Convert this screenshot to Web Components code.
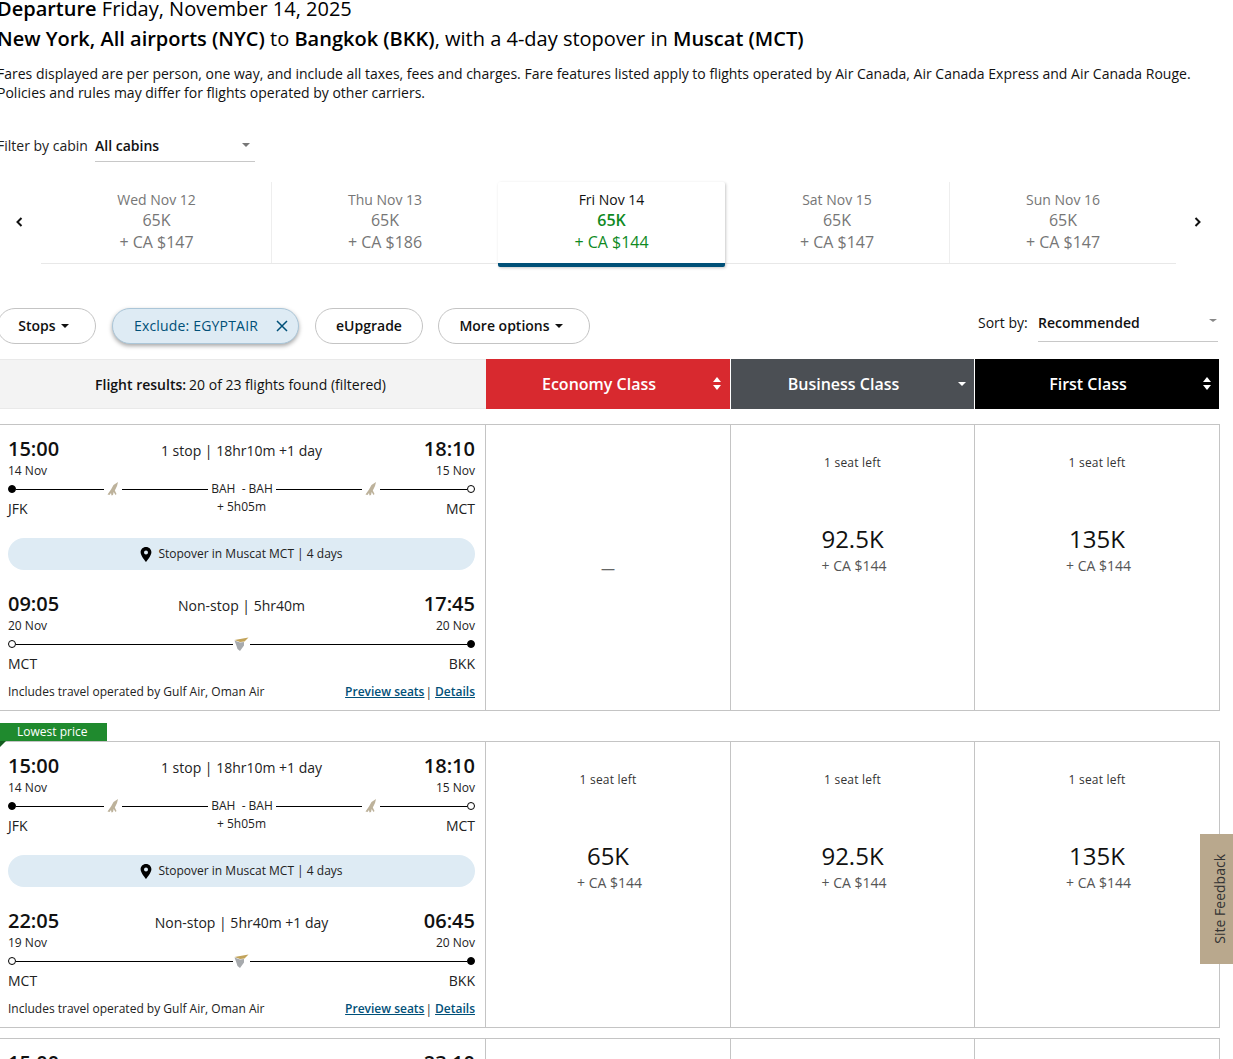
<!DOCTYPE html>
<html lang="en"><head><meta charset="utf-8"><title>Flights</title>
<style>
html{height:1059px;overflow:hidden;background:#fff}
body{margin:-6px 0 0 -3px;width:1236px;font-family:"Open Sans",sans-serif;color:#000;font-size:14px}
site-feedback{position:fixed;right:0;top:834px}
</style></head><body>
<page-intro></page-intro>
<cabin-filter></cabin-filter>
<date-strip>
  <date-tab style="flex-basis:231px;padding-left:1px" day="Wed Nov 12" pts="65K" cash="+ CA $147"></date-tab>
  <date-tab style="flex-basis:226px;border-right:0" day="Thu Nov 13" pts="65K" cash="+ CA $186"></date-tab>
  <date-tab style="flex-basis:227px" day="Fri Nov 14" pts="65K" cash="+ CA $144" active></date-tab>
  <date-tab style="flex-basis:225px" day="Sat Nov 15" pts="65K" cash="+ CA $147"></date-tab>
  <date-tab style="flex-basis:226px" day="Sun Nov 16" pts="65K" cash="+ CA $147" last></date-tab>
</date-strip>
<filter-bar>
  <filter-chip style="width:99px;padding-right:6px" caret>Stops</filter-chip>
  <filter-chip style="width:187px" on>Exclude: EGYPTAIR</filter-chip>
  <filter-chip style="width:108px">eUpgrade</filter-chip>
  <filter-chip style="width:152px;margin-left:-1px;padding-right:6px" caret>More options</filter-chip>
</filter-bar>
<results-head></results-head>
<flight-row style="margin-top:15px">
  <flight-seg dep="15:00" arr="18:10" info="1 stop | 18hr10m +1 day" d1="14 Nov" d2="15 Nov" a="JFK" b="MCT" stop></flight-seg>
  <stop-pill></stop-pill>
  <flight-seg dep="09:05" arr="17:45" info="Non-stop | 5hr40m" d1="20 Nov" d2="20 Nov" a="MCT" b="BKK"></flight-seg>
  <fare-cell slot="f1"></fare-cell>
  <fare-cell slot="f2" pts="92.5K"></fare-cell>
  <fare-cell slot="f3" pts="135K"></fare-cell>
</flight-row>
<flight-row style="margin-top:30px" lowest>
  <flight-seg dep="15:00" arr="18:10" info="1 stop | 18hr10m +1 day" d1="14 Nov" d2="15 Nov" a="JFK" b="MCT" stop></flight-seg>
  <stop-pill></stop-pill>
  <flight-seg dep="22:05" arr="06:45" info="Non-stop | 5hr40m +1 day" d1="19 Nov" d2="20 Nov" a="MCT" b="BKK"></flight-seg>
  <fare-cell slot="f1" pts="65K"></fare-cell>
  <fare-cell slot="f2" pts="92.5K"></fare-cell>
  <fare-cell slot="f3" pts="135K"></fare-cell>
</flight-row>
<flight-row style="margin-top:10px">
  <flight-seg dep="15:00" arr="23:10" info="" d1="14 Nov" d2="15 Nov" a="JFK" b="MCT" stop></flight-seg>
</flight-row>
<site-feedback></site-feedback>
<script>
const def=(name,css,html)=>customElements.define(name,class extends HTMLElement{
  connectedCallback(){ if(this.shadowRoot)return;
    const a=n=>this.getAttribute(n)||'';
    this.attachShadow({mode:'open'}).innerHTML='<style>'+css+'</style>'+(typeof html==='function'?html(a,this):html);
  }});
const caret=(c,w=4,h=4)=>`<i style="display:block;width:0;height:0;border:${w}px solid transparent;border-bottom:0;border-top:${h}px solid ${c}"></i>`;
const caretUp=(c,w=4,h=4)=>`<i style="display:block;width:0;height:0;border:${w}px solid transparent;border-top:0;border-bottom:${h}px solid ${c}"></i>`;

def('page-intro',`:host{display:block}
 h1{margin:0;font:400 20px/30px "Open Sans",sans-serif}
 b{font-weight:600}
 p{margin:10px 0 0;font-size:14px;line-height:19px;width:1215px;color:#111}`,
 `<h1><b>Departure</b> Friday, November 14, 2025</h1>
  <h1><b>New York, All airports (NYC)</b> to <b>Bangkok (BKK)</b>, with a 4-day stopover in <b>Muscat (MCT)</b></h1>
  <p>Fares displayed are per person, one way, and include all taxes, fees and charges. Fare features listed apply to flights operated by Air Canada, Air Canada Express and Air Canada Rouge. Policies and rules may differ for flights operated by other carriers.</p>`);

def('cabin-filter',`:host{display:flex;align-items:stretch;margin-top:28px;height:32px;font-size:14px;color:#222}
 .l{line-height:32px;width:98px;flex:none}
 .s{width:160px;border-bottom:1px solid #c8c8c8;display:flex;justify-content:space-between;align-items:center;font-weight:600;color:#111;line-height:32px;height:31px}
 .s .c{margin:0 5px 1px 0}`,
 ()=>`<div class="l">Filter by cabin</div><div class="s"><span>All cabins</span><span class="c">${caret('#777')}</span></div>`);

def('date-strip',`:host{display:flex;margin-top:20px;height:85px;position:relative}
 .arrow{flex:none;width:44px;height:79px;display:flex;align-items:center;padding-left:18px;box-sizing:border-box}
 .tabs{display:flex;flex:none;width:1135px;height:82px;border-bottom:1px solid #e8e8e8;box-sizing:border-box}
 .r{padding-left:17px}`,
 `<div class="arrow"><svg width="9" height="12" viewBox="0 0 9 12"><path d="M6.500 2 2.500 6l4 4" fill="none" stroke="#111" stroke-width="2"/></svg></div>
  <div class="tabs"><slot></slot></div>
  <div class="arrow r"><svg width="9" height="12" viewBox="0 0 9 12"><path d="M2.500 2l4 4-4 4" fill="none" stroke="#111" stroke-width="2"/></svg></div>`);

def('date-tab',`:host{display:block;flex:0 0 227px;box-sizing:border-box;text-align:center;color:#767676;padding-top:8px;border-right:1px solid #eee;height:81px;font-size:16px}
 :host([last]){border-right:0}
 :host([active]){height:85px;border-right:0;border-bottom:4px solid #005078;box-shadow:1px 1px 3px rgba(0,0,0,.22);color:#0f8a1f;border-radius:2px;position:relative;background:#fff}
 .d{font-size:14px;line-height:20px}
 .p{line-height:21px}
 .c{line-height:22px}
 :host([active]) .d{color:#111}
 :host([active]) .p{font-weight:600}`,
 a=>`<div class="d">${a('day')}</div><div class="p">${a('pts')}</div><div class="c">${a('cash')}</div>`);

def('filter-bar',`:host{display:flex;margin-top:41px;height:36px;position:relative}
 .g{display:flex;gap:16px}
 .sort{position:absolute;left:981px;top:0;display:flex;font-size:14px;color:#111}
 .sl{line-height:29px;width:60px}
 .ss{width:180px;height:33px;border-bottom:1px solid #c8c8c8;display:flex;justify-content:space-between;font-weight:600;line-height:30px}
 .ss i{margin:11px 1px 0 0}`,
 ()=>`<div class="g"><slot></slot></div>
  <div class="sort"><div class="sl">Sort by:</div><div class="ss"><span>Recommended</span>${caret('#888',4,3)}</div></div>`);

def('filter-chip',`:host{display:flex;box-sizing:border-box;height:36px;border:1px solid #c4c4c4;border-radius:18px;align-items:center;justify-content:center;font-size:14px;font-weight:600;color:#111;gap:5px;background:#fff;padding-bottom:2px}
 :host([on]){background:#deebf4;border-color:#abc6d8;box-shadow:0 2px 4px rgba(0,0,0,.35);color:#005078;justify-content:flex-start;padding-left:21px;gap:0;font-weight:500;letter-spacing:.18px}
 svg{display:block;margin-left:18px;margin-top:1px}
 .k{margin-top:2px}`,
 (a,el)=>`<slot></slot>${el.hasAttribute('caret')?`<span class="k">${caret('#111')}</span>`:''}${el.hasAttribute('on')?'<svg width="12" height="12" viewBox="0 0 12 12"><path d="M1 1l10 10M11 1 1 11" stroke="#005078" stroke-width="1.500"/></svg>':''}`);

def('results-head',`:host{display:grid;grid-template-columns:489px 245px 244px 244px;margin-top:15px;height:50px;width:1222px}
 div{display:flex;align-items:center;justify-content:center;position:relative;color:#fff;font-size:16px;font-weight:600;padding-right:18px;box-sizing:border-box}
 .t{background:#f3f3f3;color:#111;font-size:14px;font-weight:400;border-top:1px solid #e9e9e9;border-bottom:1px solid #e9e9e9;padding-right:2px}
 .t b{font-weight:600;margin-right:3px}
 .e{background:#d8292f;border-right:1px solid #fff}
 .b{background:#4b4f54;border-right:1px solid #fff}
 .f{background:#000}
 .a{position:absolute;right:8px;top:18px;width:8px;display:flex;flex-direction:column;gap:3px;align-items:center}`,
 ()=>`<div class="t"><b>Flight results:</b> 20 of 23 flights found (filtered)</div>
  <div class="e">Economy Class<span class="a" style="right:9px">${caretUp('#fff',4,5)}${caret('#fff',4,5)}</span></div>
  <div class="b">Business Class<span class="a" style="top:23px">${caret('#fff',4,4)}</span></div>
  <div class="f">First Class<span class="a">${caretUp('#fff',4,5)}${caret('#fff',4,5)}</span></div>`);

def('flight-row',`:host{display:grid;grid-template-columns:488px 245px 244px 244px;width:1223px;height:287px;box-sizing:border-box;border:1px solid #c4c4c4;position:relative}
 .m{border-right:1px solid #c4c4c4;padding:9px 10px 0 10px;display:flex;flex-direction:column;min-width:0}
 .x{border-right:1px solid #c4c4c4}
 .foot{display:flex;justify-content:space-between;font-size:12px;line-height:16px;margin-top:10px;color:#222}
 .lk{display:flex}
 .sep{color:#333;margin:1px 3px 0 1px}
 a{color:#005078;font-weight:600;text-decoration:underline}
 .tag{position:absolute;left:2px;top:-19px;width:107px;height:18px;background:#1f8a2e;color:#fff;font-size:12px;line-height:18px;padding-left:17px;box-sizing:border-box}
 .tag::after{content:"";position:absolute;left:0;top:18px;border-top:6px solid #145d1f;border-right:6px solid transparent}`,
 (a,el)=>`${el.hasAttribute('lowest')?'<div class="tag">Lowest price</div>':''}
  <div class="m"><slot></slot><div class="foot"><span>Includes travel operated by Gulf Air, Oman Air</span><span class="lk"><a>Preview seats</a><span class="sep">|</span><a>Details</a></span></div></div>
  <div class="x"><slot name="f1"></slot></div><div class="x"><slot name="f2"></slot></div><div class="x" style="border-right:0"><slot name="f3"></slot></div>`);

const falcon=`<svg style="margin-right:-1px" width="15" height="14" viewBox="0 0 15 14"><path d="M12 0 7.500 3 5 7.500 1.500 12.500 3.500 13 5 11 5.500 13.500 7 13 7.700 10 9.500 13 10.500 12 8.800 8.500 11 4Z" fill="#bdb29b"/></svg>`;
const oman=`<svg style="margin:0 -1px" width="15" height="15" viewBox="0 0 15 15"><path d="M.5 3 14.500 .500 10.500 4.500 6 5Z" fill="#c2a35a"/><path d="M.5 3.500 6 5.500 10 5 10 8.500 6 14 3.500 12 2 7.500Z" fill="#a7aaad"/></svg>`;

def('flight-seg',`:host{display:block;font-size:14px;color:#222}
 .top{display:flex;justify-content:space-between;align-items:center;height:28px;position:relative}
 .tm{font-size:20px;font-weight:600;color:#111}
 .i{position:absolute;left:0;right:0;text-align:center;top:4px;line-height:26px;pointer-events:none}
 .ds{display:flex;justify-content:space-between;font-size:12px;line-height:16px;margin-top:1px;height:16px;padding-bottom:5px}
 .ln{display:flex;align-items:center;height:10px;gap:2px}
 .dot{width:8px;height:8px;border-radius:50%;background:#000;border:1px solid #000;box-sizing:border-box;flex:none}
 .dot.o{background:#fff}
 hr{flex:1;height:1px;background:#000;border:0;margin:0}
 hr.a{flex:0 0 88px;margin-left:-2px}
 hr.z{flex:0 0 87px;margin-right:-2px}
 .lb{font-size:12px;line-height:12px;flex:none;padding:0 1px}
 svg{flex:none;display:block}
 .cd{display:flex;justify-content:space-between;align-items:flex-start;margin-top:5px;line-height:20px;height:20px;position:relative}
 .cd .v{font-size:12px;line-height:16px;position:absolute;left:0;right:0;text-align:center}`,
 (a,el)=>{const stop=el.hasAttribute('stop');const oa=a('a')==='JFK';
  return `<div class="top"><span class="tm">${a('dep')}</span><span class="i">${a('info')}</span><span class="tm">${a('arr')}</span></div>
  <div class="ds"><span>${a('d1')}</span><span>${a('d2')}</span></div>
  <div class="ln">${oa?'<span class="dot"></span>':'<span class="dot o"></span>'}${stop?'<hr class="a">'+falcon+'<hr><span class="lb">BAH&nbsp; - BAH</span><hr>'+falcon+'<hr class="z">':'<hr style="margin-left:-2px">'+oman+'<hr style="margin-right:-2px">'}<span class="dot ${oa?'o':''}"></span></div>
  <div class="cd"><span>${a('a')}</span>${stop?'<span class="v">+ 5h05m</span>':''}<span>${a('b')}</span></div>`});

def('stop-pill',`:host{display:flex;align-items:center;justify-content:center;gap:6px;height:32px;border-radius:16px;background:#deebf4;font-size:12px;color:#222;margin:19px 0 19px}
 span{margin-top:-2px}`,
 `<svg width="12" height="15" viewBox="0 0 12 15"><path fill-rule="evenodd" d="M6 0C2.700 0 .6 2.500 .6 5.300 .6 9 6 15 6 15s5.400-6 5.400-9.700C11.400 2.500 9.300 0 6 0Zm0 3.400a2 2 0 1 1 0 4 2 2 0 0 1 0-4Z" fill="#000"/></svg><span>Stopover in Muscat MCT | 4 days</span>`);

def('fare-cell',`:host{display:block;text-align:center;height:285px;position:relative;color:#333}
 .s{font-size:12px;line-height:16px;padding-top:30px;height:46px;letter-spacing:.2px}
 .n{font-size:24px;line-height:34px;margin-top:21px;color:#111}
 .c{font-size:14px;line-height:18px;color:#555;padding-left:3px;margin-top:1px}
 .d{padding-top:136px;line-height:16px;color:#666;font-size:14px}`,
 a=>a('pts')?`<div class="s">1 seat left</div><div class="n">${a('pts')}</div><div class="c">+ CA $144</div>`:`<div class="d">—</div>`);

def('site-feedback',`:host{display:flex;width:33px;height:130px;background:#b9a88d;align-items:center;justify-content:center}
 span{writing-mode:vertical-rl;transform:rotate(180deg);font-size:14px;color:#333;white-space:nowrap;margin-left:6px}`,
 `<span>Site Feedback</span>`);
</script>
</body></html>
